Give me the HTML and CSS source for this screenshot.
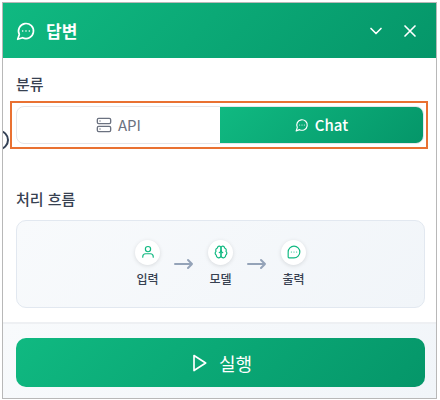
FILE: index.html
```html
<!DOCTYPE html>
<html lang="ko">
<head>
<meta charset="utf-8">
<meta name="viewport" content="width=device-width, initial-scale=1">
<title>답변</title>
<link rel="stylesheet" href="styles.css">
</head>
<body>
<svg class="sprite" aria-hidden="true">
  <symbol id="chat" viewBox="0 0 24 24"><path d="M7.9 20A9 9 0 1 0 4 16.1L2 22Z"/><path d="M8 12h.01M12 12h.01M16 12h.01"/></symbol>
</svg>
<main class="panel">
  <header class="header">
    <svg class="icon icon-lg"><use href="#chat"/></svg>
    <h1 class="title">답변</h1>
    <button class="icon-button" type="button" aria-label="접기"><svg class="icon icon-lg" viewBox="0 0 24 24"><path d="m6 9 6 6 6-6"/></svg></button>
    <button class="icon-button" type="button" aria-label="닫기"><svg class="icon icon-lg" viewBox="0 0 24 24"><path d="M18 6 6 18M6 6l12 12"/></svg></button>
  </header>
  <div class="body">
    <span class="port"></span>
    <section>
      <h2 class="label">분류</h2>
      <div class="highlight">
        <div class="segments">
          <button class="segment" type="button"><svg class="icon icon-md" viewBox="0 0 24 24"><rect x="2" y="2" width="20" height="8" rx="2"/><rect x="2" y="14" width="20" height="8" rx="2"/><path d="M6 6h.01M6 18h.01"/></svg>API</button>
          <button class="segment active" type="button" aria-pressed="true"><svg class="icon icon-sm"><use href="#chat"/></svg>Chat</button>
        </div>
      </div>
    </section>
    <section class="flow-section">
      <h2 class="label">처리 흐름</h2>
      <div class="flow">
        <div class="step"><span class="dot"><svg class="icon icon-sm" viewBox="0 0 24 24"><path d="M21 21v-1a5 5 0 0 0-5-5H8a5 5 0 0 0-5 5v1"/><circle cx="12" cy="7" r="4.5"/></svg></span>입력</div>
        <svg class="icon arrow" viewBox="0 0 20 12"><path d="M1 6h17M14 2l4 4-4 4"/></svg>
        <div class="step"><span class="dot"><svg class="icon icon-sm" viewBox="0 0 24 24"><path d="M12 5a3 3 0 1 0-5.997.125 4 4 0 0 0-2.526 5.77 4 4 0 0 0 .556 6.588A4 4 0 1 0 12 18Z"/><path d="M12 5a3 3 0 1 1 5.997.125 4 4 0 0 1 2.526 5.77 4 4 0 0 1-.556 6.588A4 4 0 1 1 12 18Z"/><path d="M15 13a4.5 4.5 0 0 1-3-4 4.5 4.5 0 0 1-3 4"/></svg></span>모델</div>
        <svg class="icon arrow" viewBox="0 0 20 12"><path d="M1 6h17M14 2l4 4-4 4"/></svg>
        <div class="step"><span class="dot"><svg class="icon icon-sm" viewBox="0 0 24 24"><path d="M12 22a10 10 0 1 0-10-10v8.500q0 1.500 1.500 1.500Z"/><path d="M7.500 12h.01M12 12h.01M16.500 12h.01"/></svg></span>출력</div>
      </div>
    </section>
  </div>
  <footer class="footer">
    <button class="run" type="button"><svg class="icon icon-lg" viewBox="0 0 24 24"><path d="m6 3 14 9-14 9Z"/></svg>실행</button>
  </footer>
</main>
</body>
</html>
```
FILE: styles.css
```css
* { box-sizing: border-box; }
body {
  margin: 0;
  padding: 2px 3px 1px 2px;
  background: #fff;
  color: #374151;
  font-family: "Noto Sans CJK KR", "Noto Sans", sans-serif;
}
button { font: inherit; border: 0; padding: 0; background: none; cursor: pointer; }
.sprite { display: none; }
.icon { fill: none; stroke: currentColor; stroke-width: 2; stroke-linecap: round; stroke-linejoin: round; flex: none; }
.icon-lg { width: 20px; height: 20px; }
.icon-md { width: 16px; height: 16px; }
.icon-sm { width: 14px; height: 14px; }
.panel { border: 1px solid #b8b8b8; }
.header {
  display: flex;
  align-items: center;
  height: 55px;
  padding: 0 16px 0 13px;
  color: #fff;
  background: linear-gradient(135deg, #10b981, #059669);
}
.title { flex: 1; margin: 0 0 0 10px; font-size: 17px; line-height: 24px; font-weight: 700; }
.icon-button { display: flex; margin-left: 14px; color: #fff; }
.body { position: relative; padding: 14px 8px 14px 7px; overflow: hidden; }
.port {
  position: absolute;
  left: -14px;
  top: 72px;
  width: 20px;
  height: 20px;
  border: 2px solid #334155;
  border-radius: 50%;
}
.label { margin: 0 6px; font-size: 15px; line-height: 24px; font-weight: 500; }
.highlight { margin-top: 5px; padding: 3px 2px 3px 4px; border: 2px solid #e97132; }
.segments {
  display: flex;
  height: 38px;
  overflow: hidden;
  border: 1px solid #e5e7eb;
  border-radius: 8px;
}
.segment {
  flex: 1;
  display: flex;
  align-items: center;
  justify-content: center;
  gap: 6px;
  color: #6b7280;
  font-size: 15px;
  line-height: 20px;
}
.active {
  color: #fff;
  font-weight: 500;
  background: linear-gradient(135deg, #10b981, #059669);
}
.flow-section { margin-top: 38px; }
.flow {
  display: flex;
  align-items: center;
  justify-content: center;
  gap: 14px;
  height: 88px;
  margin: 9px 3px 0 6px;
  border: 1px solid #e2e8f0;
  border-radius: 10px;
  background: linear-gradient(135deg, #f8fafc, #f1f5f9);
}
.step { display: flex; flex-direction: column; align-items: center; gap: 4px; font-size: 12px; line-height: 20px; font-weight: 500; }
.dot {
  display: flex;
  align-items: center;
  justify-content: center;
  width: 25px;
  height: 25px;
  border-radius: 50%;
  color: #10b981;
  background: #fff;
  box-shadow: 0 1px 4px rgb(0 0 0 / 12%);
}
.arrow { width: 20px; height: 12px; color: #94a3b8; }
.footer {
  padding: 14px 11px 11px 13px;
  border-top: 2px solid #eef0f3;
  background: linear-gradient(135deg, #f8fafc, #f1f5f9);
}
.run {
  display: flex;
  align-items: center;
  justify-content: center;
  gap: 10px;
  width: 100%;
  height: 49px;
  border-radius: 10px;
  color: #fff;
  font-size: 18px;
  line-height: 24px;
  background: linear-gradient(135deg, #10b981, #059669);
}
```
